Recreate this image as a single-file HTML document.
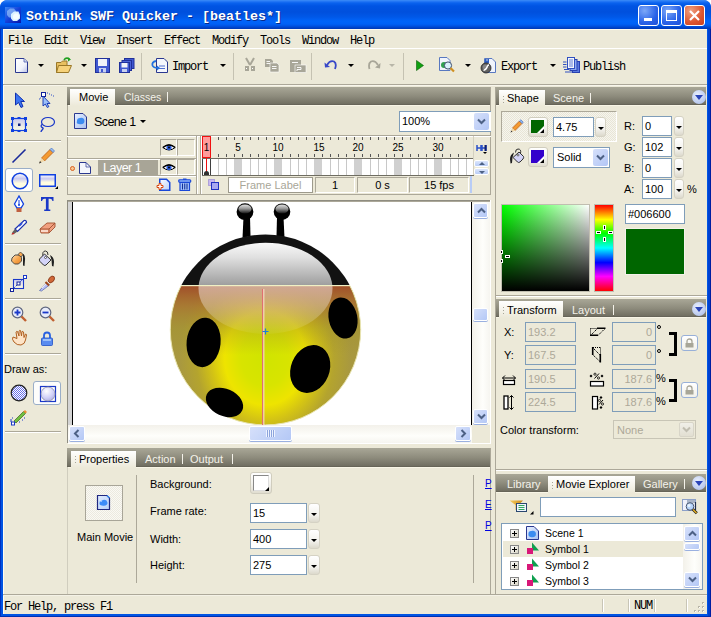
<!DOCTYPE html>
<html><head><meta charset="utf-8">
<style>
*{box-sizing:border-box}
html,body{margin:0;padding:0;background:#fff}
body{width:711px;height:617px;overflow:hidden;position:relative;background:#fff;font-family:"Liberation Sans",sans-serif;font-size:11px;color:#000}
.a{position:absolute}
.mono{font-family:"Liberation Mono",monospace}
.tb{background:linear-gradient(#A9A797,#8E8C7D 50%,#716F62 94%,#5E5C50)}
.tab{background:linear-gradient(#FCFBF6,#ECE9D8)}
.inp{background:#fff;border:1px solid #7F9DB9}
.dinp{background:#ECE9D8;border:1px solid #7F9DB9;color:#ACA899}
.ddb{background:linear-gradient(#FFFFFF,#F4F3EE 60%,#DCD9CC);border:1px solid #D5D2C4;border-radius:3px}
.ddb:after{content:"";position:absolute;left:calc(50% - 3px);top:9px;border-left:3px solid transparent;border-right:3px solid transparent;border-top:3px solid #000}
.xpd{background:linear-gradient(135deg,#E2EAFE,#B6CAF9);border:1px solid #fff;border-radius:2px;box-shadow:0 0 0 0 #fff}
.lbl{white-space:nowrap}
.sep{background:#C5C2B2}
</style></head><body>

<!-- window frame -->
<div class="a" style="left:0;top:0;width:711px;height:617px;background:#0054E3;border-radius:8px 8px 0 0"></div>
<div class="a" style="left:0;top:29px;width:1px;height:588px;background:#0030C0"></div>
<div class="a" style="left:710px;top:29px;width:1px;height:588px;background:#001EA0"></div>
<div class="a" style="left:708px;top:29px;width:2px;height:588px;background:#0040D0"></div>
<div class="a" style="left:0;top:616px;width:711px;height:1px;background:#0030B0"></div>
<!-- title bar -->
<div class="a" style="left:0;top:0;width:711px;height:29px;border-radius:7px 7px 0 0;background:linear-gradient(#3E8EF6 0px,#2A7CF6 1px,#0A62EE 3px,#0054E3 6px,#0050DD 12px,#0058E8 17px,#0064F9 21px,#0061F6 24px,#0052E2 26px,#003FC2 28px,#0039B4 29px)"></div>
<!-- app icon -->
<svg class="a" style="left:5px;top:7px" width="16" height="16"><defs><linearGradient id="aig" x1="0" y1="0" x2="1" y2="1"><stop offset="0" stop-color="#3C88F8"/><stop offset=".5" stop-color="#1440D8"/><stop offset="1" stop-color="#0A14A8"/></linearGradient></defs><rect width="16" height="16" fill="url(#aig)"/><path d="M2 4L5 1.5H9L11 4V8L8 10.5H4L2 8Z" fill="#8CB8F8" opacity=".75"/><path d="M6 7L9 4.5H13.5L15 8V11.5L12 14H8L6 11.5Z" fill="#D8F0FF"/><path d="M8 8.5L10 6.5H13L14 9V11L12 12.5H9L8 11Z" fill="#F4FCFF"/></svg>
<div class="a mono" style="left:26px;top:9px;font-weight:bold;font-size:13.33px;line-height:16px;color:#fff;text-shadow:1px 1px 0 #0A2A8A;white-space:nowrap">Sothink SWF Quicker - [beatles*]</div>
<!-- title buttons -->
<div class="a" style="left:638px;top:5px;width:21px;height:21px;border:1px solid #fff;border-radius:3px;background:radial-gradient(circle at 30% 25%,#7DA8F8,#2A63E8 60%,#1F50D8)"><div class="a" style="left:5px;top:12px;width:8px;height:3px;background:#fff"></div></div>
<div class="a" style="left:661px;top:5px;width:21px;height:21px;border:1px solid #fff;border-radius:3px;background:radial-gradient(circle at 30% 25%,#7DA8F8,#2A63E8 60%,#1F50D8)"><div class="a" style="left:4px;top:4px;width:11px;height:11px;border:1px solid #fff;border-top:3px solid #fff"></div></div>
<div class="a" style="left:684px;top:5px;width:21px;height:21px;border:1px solid #fff;border-radius:3px;background:radial-gradient(circle at 30% 25%,#F0A080,#DC5530 60%,#C84020)"><svg class="a" style="left:3px;top:3px" width="13" height="13"><path d="M2 2L11 11M11 2L2 11" stroke="#fff" stroke-width="2.2"/></svg></div>

<!-- client -->
<div class="a" style="left:3px;top:29px;width:704px;height:585px;background:#ECE9D8"></div>
<div class="a" style="left:3px;top:29px;width:1px;height:585px;background:#FFFBF0"></div>
<div class="a" style="left:3px;top:29px;width:704px;height:1px;background:#FFFBF0"></div>

<!-- menu -->
<div class="a mono" style="left:8px;top:34px;font-size:12px;letter-spacing:-1.2px;line-height:14px;white-space:pre">File  Edit  View  Insert  Effect  Modify  Tools  Window  Help</div>
<div class="a" style="left:3px;top:48px;width:704px;height:1px;background:#FFFFFF"></div>

<!-- toolbar -->
<div class="a" style="left:3px;top:84px;width:704px;height:1px;background:#ACA899"></div>
<div class="a" style="left:3px;top:85px;width:704px;height:1px;background:#F8F6EC"></div>

<!-- toolbar icons -->
<svg class="a" style="left:14px;top:57px" width="15" height="17"><defs><linearGradient id="pg" x1="0" y1="0" x2="1" y2="1"><stop offset="0" stop-color="#fff"/><stop offset=".6" stop-color="#F0F2FA"/><stop offset="1" stop-color="#B8C0E8"/></linearGradient></defs><path d="M1.5 1.5H10L13.5 5V15.5H1.5Z" fill="url(#pg)" stroke="#2A3890"/><path d="M10 1.5V5H13.5" fill="#D0D8F0" stroke="#5060B0" stroke-width=".8"/></svg>
<div class="a" style="left:38px;top:64px;border-left:3px solid transparent;border-right:3px solid transparent;border-top:3px solid #000"></div>
<svg class="a" style="left:55px;top:56px" width="18" height="18"><path d="M1.5 6.5H6L7.5 5H12V16.5H1.5Z" fill="#E8C060" stroke="#9A7828"/><path d="M3.5 9.5H16.5L13.5 16.5H1.5Z" fill="#F6D27A" stroke="#9A7828"/><path d="M9 4Q11 1 14.5 3" fill="none" stroke="#20A020" stroke-width="1.6"/><path d="M13 1.5L16 3.5L13 5.5Z" fill="#20A020"/></svg>
<div class="a" style="left:81px;top:64px;border-left:3px solid transparent;border-right:3px solid transparent;border-top:3px solid #000"></div>
<svg class="a" style="left:95px;top:58px" width="16" height="16"><rect x=".5" y=".5" width="14" height="14" fill="#4058D0" stroke="#20309A"/><rect x="3" y="1" width="9" height="7" fill="#F0F2F8"/><rect x="4" y="10" width="7" height="4.5" fill="#C8D0F0"/><rect x="6" y="11" width="2" height="3" fill="#4058D0"/></svg>
<svg class="a" style="left:119px;top:58px" width="16" height="16"><rect x="5.5" y=".5" width="9.5" height="10" fill="#4058D0" stroke="#20309A"/><rect x="3" y="2.5" width="9.5" height="10" fill="#4A62D8" stroke="#20309A"/><rect x=".5" y="4.5" width="10" height="10" fill="#4058D0" stroke="#20309A"/><rect x="2.5" y="5" width="6" height="4.5" fill="#F0F2F8"/><rect x="3" y="11" width="5" height="3" fill="#C8D0F0"/></svg>
<div class="a sep" style="left:141px;top:53px;width:1px;height:27px"></div>
<svg class="a" style="left:151px;top:57px" width="18" height="17"><path d="M5.5 1.5H13L16.5 5V15.5H5.5Z" fill="#F4F6FC" stroke="#2A3890"/><path d="M8 9H14M8 11.5H14" stroke="#5070D0"/><path d="M5 4Q0.5 5 1.5 8.5Q2.5 11 7 11" fill="none" stroke="#2070E0" stroke-width="1.8"/><path d="M6 8.5L9 11L6 13.5Z" fill="#2070E0"/></svg>
<div class="a mono" style="left:172px;top:60px;font-size:12px;letter-spacing:-1.2px;line-height:14px">Import</div>
<div class="a" style="left:220px;top:64px;border-left:3px solid transparent;border-right:3px solid transparent;border-top:3px solid #000"></div>
<div class="a sep" style="left:233px;top:53px;width:1px;height:27px"></div>
<svg class="a" style="left:244px;top:57px" width="13" height="16"><path d="M2 1L6 8M10 1L6 8" stroke="#A8A698" stroke-width="2"/><rect x="1" y="9" width="4" height="5" fill="#A8A698"/><rect x="7" y="9" width="4" height="5" fill="#A8A698"/><rect x="2" y="11" width="1" height="1" fill="#fff"/><rect x="8" y="11" width="1" height="1" fill="#fff"/></svg>
<svg class="a" style="left:264px;top:58px" width="17" height="15"><path d="M1 1H7L9 3V9H1Z" fill="#A8A698"/><path d="M6 5H13L15 7V14H6Z" fill="#A8A698" stroke="#fff" stroke-width=".6"/><path d="M2.5 3.5H6M2.5 5.5H6M8 8.5H12.5M8 10.5H12.5" stroke="#fff" stroke-width=".9"/></svg>
<svg class="a" style="left:289px;top:58px" width="18" height="15"><path d="M1 2H8V3H12V7H1Z" fill="#A8A698"/><rect x="1" y="2" width="11" height="12" fill="#A8A698"/><rect x="6" y="7" width="11" height="7.5" fill="#A8A698" stroke="#fff" stroke-width=".6"/><path d="M3 4.5H9M8 9.5H12V11.5H8V13" stroke="#fff" stroke-width=".9" fill="none"/></svg>
<div class="a sep" style="left:311px;top:53px;width:1px;height:27px"></div>
<svg class="a" style="left:324px;top:59px" width="14" height="12"><path d="M3 6Q6 1 10 2.5Q13 4.5 11 10" fill="none" stroke="#3848C8" stroke-width="1.8"/><path d="M0.5 3.5L1 8.5L6 8Z" fill="#3848C8"/></svg>
<div class="a" style="left:348px;top:64px;border-left:3px solid transparent;border-right:3px solid transparent;border-top:3px solid #000"></div>
<svg class="a" style="left:367px;top:59px" width="14" height="12"><path d="M11 6Q8 1 4 2.5Q1 4.5 2.5 10" fill="none" stroke="#A8A698" stroke-width="1.8"/><path d="M13.5 4L13 9.5L8 8.5Z" fill="#A8A698"/></svg>
<div class="a" style="left:389px;top:64px;border-left:3px solid transparent;border-right:3px solid transparent;border-top:3px solid #B8B6A8"></div>
<div class="a sep" style="left:403px;top:53px;width:1px;height:27px"></div>
<svg class="a" style="left:416px;top:60px" width="9" height="12"><path d="M0.5 0.5L7.5 5.5L0.5 10.5Z" fill="#10A010" stroke="#086008" stroke-width=".6"/></svg>
<svg class="a" style="left:439px;top:57px" width="17" height="17"><path d="M.5 .5H8L11 3.5V13.5H.5Z" fill="#F0F4FC" stroke="#5878C0"/><circle cx="5" cy="8" r="3" fill="#30A050"/><circle cx="9" cy="8.5" r="3.6" fill="#D8F0FA" stroke="#405070" stroke-width="1"/><path d="M11.5 11L15 14.5" stroke="#D09020" stroke-width="2.2"/></svg>
<div class="a" style="left:465px;top:64px;border-left:3px solid transparent;border-right:3px solid transparent;border-top:3px solid #000"></div>
<svg class="a" style="left:480px;top:57px" width="17" height="17"><path d="M4.5 1.5H12L15.5 5V15.5H4.5Z" fill="#F0F4FC" stroke="#5878C0"/><rect x="5" y="2" width="4" height="4" fill="#3060C0"/><path d="M6 3H8" stroke="#fff" stroke-width=".7"/><circle cx="6" cy="11" r="5" fill="#606060" stroke="#202020" stroke-width=".8"/><circle cx="5.2" cy="10" r="2.5" fill="#A0A0A0" opacity=".6"/><path d="M3.5 13.5Q6.5 12.5 7.5 9Q8 8 9 8" stroke="#fff" stroke-width="1.3" fill="none"/></svg>
<div class="a mono" style="left:501px;top:60px;font-size:12px;letter-spacing:-1.2px;line-height:14px">Export</div>
<div class="a" style="left:550px;top:64px;border-left:3px solid transparent;border-right:3px solid transparent;border-top:3px solid #000"></div>
<svg class="a" style="left:563px;top:57px" width="17" height="17"><rect x="9.5" y="4.5" width="7" height="11" fill="#5878E0" stroke="#2840B0"/><rect x="7" y="2.5" width="7" height="11" fill="#8CA8F0" stroke="#2840B0"/><rect x="4.5" y=".5" width="7" height="11" fill="#F4F6FC" stroke="#3050C0"/><path d="M6 3H10M6 5H10M6 7H10M6 9H10" stroke="#5070D0" stroke-width=".9"/><path d="M0 5H3.5M0 7.5H3.5M0 10H3.5M1 12.5H6M2 15H9" stroke="#3050C0" stroke-width="1"/></svg>
<div class="a mono" style="left:583px;top:60px;font-size:12px;letter-spacing:-1.2px;line-height:14px">Publish</div>

<!--TOOLBAR-->

<!-- tool panel -->
<svg class="a" style="left:14px;top:92px" width="12" height="17"><path d="M1.5 1V13L4.5 10.5L7 15.5L9 14.5L6.8 9.5H10.5Z" fill="#3C74F0" stroke="#1030B0" stroke-width="1"/></svg>
<svg class="a" style="left:38px;top:92px" width="18" height="17"><rect x="3.5" y=".5" width="4" height="4" fill="#fff" stroke="#10209A"/><path d="M9 1H10M11 2H12M13 3H14M15 4H16M1 7H2M2 6H3" stroke="#3050C8" stroke-width="1"/><path d="M5 4V14L7.3 12L9.3 15.5L10.8 14.7L9 11.5H12Z" fill="#9CC0FA" stroke="#1030B0" stroke-width=".9"/></svg>
<svg class="a" style="left:11px;top:117px" width="17" height="16"><defs><linearGradient id="tg1" x1="0" y1="0" x2="0" y2="1"><stop offset="0" stop-color="#C8C8F0"/><stop offset="1" stop-color="#FFFDE0"/></linearGradient></defs><rect x="1.5" y="1.5" width="13" height="12" fill="url(#tg1)" stroke="#1040E0" stroke-width="1.2"/><g fill="#1040E0"><rect x="0" y="0" width="3" height="3"/><rect x="13" y="0" width="3" height="3"/><rect x="0" y="12" width="3" height="3"/><rect x="13" y="12" width="3" height="3"/><rect x="6.5" y="0" width="3" height="2"/><rect x="6.5" y="13" width="3" height="2"/><rect x="0" y="6" width="2" height="3"/><rect x="14" y="6" width="2" height="3"/></g><rect x="7" y="6.5" width="2.5" height="2.5" fill="#102080"/></svg>
<svg class="a" style="left:38px;top:116px" width="18" height="17"><ellipse cx="10" cy="6" rx="6.5" ry="4.5" fill="none" stroke="#1A38C8" stroke-width="1.2"/><path d="M4.5 8Q2 10 4 11.5Q6 12 4.5 13.5Q3 15 3 16" fill="none" stroke="#1A38C8" stroke-width="1.3"/></svg>
<div class="a" style="left:5px;top:140px;width:56px;height:1px;background:#ACA899"></div>
<div class="a" style="left:5px;top:141px;width:56px;height:1px;background:#fff"></div>
<svg class="a" style="left:11px;top:148px" width="16" height="16"><path d="M1.5 14.5L14.5 1.5" stroke="#1A2A9A" stroke-width="1.6"/></svg>
<svg class="a" style="left:38px;top:147px" width="17" height="17"><path d="M3.5 11L12 2.5L15 5.5L6.5 14Z" fill="#F49A30" stroke="#B85A10" stroke-width=".8"/><path d="M12 2.5L13.5 1L16.5 4L15 5.5Z" fill="#9AC0F0" stroke="#3060C0" stroke-width=".6"/><path d="M3.5 11L1 16.5L6.5 14Z" fill="#F0D8A8"/><path d="M1 16.5L2 14L3.5 15.5Z" fill="#303030"/></svg>
<div class="a" style="left:5px;top:168px;width:28px;height:24px;background:#FDFDFB;border:1px solid #9AAEC8;border-radius:3px"></div>
<svg class="a" style="left:11px;top:172px" width="18" height="18"><defs><linearGradient id="tg2" x1="0" y1="0" x2="0" y2="1"><stop offset="0" stop-color="#FFFFFF"/><stop offset=".35" stop-color="#C8C8F0"/><stop offset=".65" stop-color="#FFFDE0"/><stop offset="1" stop-color="#FFFDE0"/></linearGradient></defs><circle cx="9" cy="9" r="7.8" fill="url(#tg2)" stroke="#1040E0" stroke-width="1.5"/></svg>
<svg class="a" style="left:38px;top:173px" width="21" height="17"><rect x="1.75" y="1.75" width="15.5" height="11.5" fill="url(#tg2)" stroke="#1040E0" stroke-width="1.5"/><path d="M20 13V16H17Z" fill="#000"/></svg>
<svg class="a" style="left:13px;top:195px" width="12" height="18"><path d="M6 1L1.5 9L4 13H8L10.5 9Z" fill="#fff" stroke="#1040E0" stroke-width="1.3"/><path d="M6 5V10" stroke="#1040E0"/><circle cx="6" cy="10" r="1" fill="#1040E0"/><rect x="3.5" y="13" width="5" height="4" fill="#C06040"/></svg>
<svg class="a" style="left:41px;top:197px" width="13" height="15"><path d="M0 0H12.5V4H11.5Q11 1.8 9 1.8H7.6V12.6H9.3V14H3.2V12.6H4.9V1.8H3.5Q1.5 1.8 1 4H0Z" fill="#1A38C8"/></svg>
<svg class="a" style="left:10px;top:219px" width="18" height="17"><path d="M5 10L14 1.5Q16.5 1 16.5 3.5L7.5 12.5Z" fill="#fff" stroke="#1A30B0" stroke-width="1.2"/><path d="M9 7L12 4" stroke="#3050D8" stroke-width="2"/><path d="M5 10L7.5 12.5L4 15L1.5 15.5L2.5 13Z" fill="#606060"/><path d="M1.5 15.5L3 13.5L4.5 15Z" fill="#E02020"/></svg>
<svg class="a" style="left:39px;top:222px" width="17" height="13"><path d="M1 7L8 1H16V5L10 11H2Z" fill="#F0A080" stroke="#A05030" stroke-width=".9"/><path d="M1 7H10V11M10 7L16 1" fill="none" stroke="#A05030" stroke-width=".9"/><path d="M2 8H9V10H2Z" fill="#FAD8C8"/></svg>
<div class="a" style="left:5px;top:243px;width:56px;height:1px;background:#ACA899"></div>
<div class="a" style="left:5px;top:244px;width:56px;height:1px;background:#fff"></div>
<svg class="a" style="left:10px;top:251px" width="17" height="16"><defs><linearGradient id="ink" x1="0" y1="0" x2="1" y2="1"><stop offset="0" stop-color="#FFE0B8"/><stop offset=".5" stop-color="#F8A850"/><stop offset="1" stop-color="#E88020"/></linearGradient></defs><path d="M2 7L5 4H9L11.5 6.5V10L8.5 13H4.5L1.5 10Z" fill="url(#ink)" stroke="#404040" stroke-width=".9"/><path d="M8 3.5L10.5 1L13 3.5L11 6Z" fill="#F8A850" stroke="#404040" stroke-width=".8"/><path d="M12.5 2.5Q15.5 4 15 9L14.5 15L13 14.5V6Z" fill="#202020"/></svg>
<svg class="a" style="left:38px;top:250px" width="18" height="17"><path d="M5 6Q4 1 7.5 1Q10 1 10 5" fill="none" stroke="#303030" stroke-width="1"/><path d="M1.5 9L6.5 4L13 10L8 15Q7 16 5.5 15L2 11.5Q1 10 1.5 9Z" fill="#D4D4F8" stroke="#303030" stroke-width="1"/><circle cx="7.5" cy="7.5" r="1" fill="#fff" stroke="#303030" stroke-width=".7"/><path d="M12 5Q16 7 16 12L15.5 16.5L14 16L13.5 10Z" fill="#202020"/></svg>
<svg class="a" style="left:10px;top:275px" width="17" height="17"><defs><linearGradient id="ftg" x1="0" y1="0" x2="0" y2="1"><stop offset="0" stop-color="#D0D0F4"/><stop offset="1" stop-color="#FFFDE0"/></linearGradient></defs><rect x="3.5" y="4.5" width="10" height="9" fill="url(#ftg)" stroke="#1A38C8" stroke-width="1.1"/><path d="M2.5 14.5L14.5 2.5" stroke="#1A38C8" stroke-width="1" stroke-dasharray="1.5 1"/><rect x=".5" y="13.5" width="3" height="3" fill="#fff" stroke="#10209A"/><rect x="13.5" y=".5" width="3" height="3" fill="#fff" stroke="#1A38C8"/><rect x="7" y="7" width="3" height="3" fill="#fff" stroke="#10209A"/></svg>
<svg class="a" style="left:38px;top:274px" width="18" height="18"><path d="M1.5 16.5L9 8.5L11.5 11L3.5 17Z" fill="#B8C0F8" stroke="#6070B0" stroke-width=".8"/><path d="M4 14L9 9" stroke="#fff" stroke-width=".8"/><path d="M7.5 8L11 11.5" stroke="#A04818" stroke-width="2"/><path d="M10 7Q11 3 14 2Q17 2 16.5 5Q16 8 12 9Z" fill="#D06838" stroke="#803010" stroke-width=".8"/></svg>
<div class="a" style="left:5px;top:298px;width:56px;height:1px;background:#ACA899"></div>
<div class="a" style="left:5px;top:299px;width:56px;height:1px;background:#fff"></div>
<svg class="a" style="left:11px;top:306px" width="17" height="17"><circle cx="6.5" cy="6.5" r="5.3" fill="#E8ECFA" stroke="#606880" stroke-width="1.2"/><path d="M6.5 3.5V9.5M3.5 6.5H9.5" stroke="#1A38C8" stroke-width="1.8"/><path d="M10.5 10.5L15 15" stroke="#C06030" stroke-width="2.4"/></svg>
<svg class="a" style="left:39px;top:306px" width="17" height="17"><circle cx="6.5" cy="6.5" r="5.3" fill="#E8ECFA" stroke="#606880" stroke-width="1.2"/><path d="M3.5 6.5H9.5" stroke="#1A38C8" stroke-width="1.8"/><path d="M10.5 10.5L15 15" stroke="#C06030" stroke-width="2.4"/></svg>
<svg class="a" style="left:10px;top:329px" width="18" height="18"><path d="M3 8Q1.5 10 4 13Q7 16.5 11 16Q15 15 15.5 11L16.5 6Q16.5 5 15.5 5L14 8.5L13.5 3Q13 2 12 2.5L11.5 7L10.5 1.5Q9.5 1 9 2L9 7L7.5 2.5Q6.5 2 6 3L7 9.5Z" fill="#FDE4C8" stroke="#B06020" stroke-width="1"/></svg>
<svg class="a" style="left:40px;top:331px" width="15" height="16"><path d="M4 7V4.5Q4 1.5 7 1.5Q10 1.5 10 4.5V7" fill="none" stroke="#2860E0" stroke-width="1.8"/><rect x="1.5" y="7" width="11" height="7.5" rx="1" fill="#5A8CF0" stroke="#2050C8" stroke-width=".8"/><rect x="3" y="8" width="8" height="2" fill="#9CC0FA"/></svg>
<div class="a" style="left:5px;top:353px;width:56px;height:1px;background:#ACA899"></div>
<div class="a" style="left:5px;top:354px;width:56px;height:1px;background:#fff"></div>
<div class="a" style="left:4px;top:363px;font-size:11px;line-height:13px;white-space:nowrap">Draw as:</div>
<svg class="a" style="left:10px;top:384px" width="18" height="18"><defs><pattern id="hatch" width="2" height="2" patternUnits="userSpaceOnUse"><rect width="2" height="2" fill="#fff"/><rect width="1" height="1" fill="#6870E8"/><rect x="1" y="1" width="1" height="1" fill="#6870E8"/></pattern></defs><circle cx="9" cy="9" r="7.8" fill="url(#hatch)" stroke="#202020" stroke-width="1.2"/></svg>
<div class="a" style="left:33px;top:381px;width:28px;height:24px;background:#FDFDFB;border:1px solid #9AAEC8;border-radius:3px"></div>
<svg class="a" style="left:39px;top:385px" width="18" height="18"><rect x="1.5" y="1.5" width="15" height="15" fill="none" stroke="#1A38C8" stroke-width="1.2"/><defs><radialGradient id="tg3" cx=".4" cy=".3" r=".8"><stop offset="0" stop-color="#FFFFFF"/><stop offset=".6" stop-color="#D0D0F8"/><stop offset="1" stop-color="#A8A8D8"/></radialGradient></defs><circle cx="9" cy="9" r="7" fill="url(#tg3)" stroke="#9090A8" stroke-width=".8"/></svg>
<svg class="a" style="left:10px;top:409px" width="18" height="17"><path d="M4 12L13.5 2.5L15.5 4.5L6 14Z" fill="#70C040" stroke="#406020" stroke-width=".7"/><path d="M13.5 2.5L15 1L17 3L15.5 4.5Z" fill="#F09030"/><path d="M1 10V13M2 9H3M9 13H10M12 11H13M14 9H15" stroke="#1A38C8"/><rect x="1.5" y="13" width="3" height="3" fill="#fff" stroke="#1A38C8"/></svg>
<div class="a" style="left:5px;top:431px;width:56px;height:1px;background:#ACA899"></div>
<div class="a" style="left:5px;top:432px;width:56px;height:1px;background:#fff"></div>

<!--TOOLS-->

<!-- center: movie panel -->
<div class="a tb" style="left:67px;top:87px;width:423px;height:18px"></div>
<div class="a" style="left:67px;top:105px;width:423px;height:1px;background:#F8F5E6"></div>
<div class="a tab" style="left:70px;top:89px;width:45px;height:17px;background:linear-gradient(#FFFFFF,#F4F2E8 60%,#ECE9D8)"></div>
<div class="a lbl" style="left:79px;top:90px;line-height:14px;font-size:11px">Movie</div>
<div class="a lbl" style="left:124px;top:90px;line-height:14px;font-size:10.5px;color:#F4F2EA">Classes</div>
<div class="a" style="left:167px;top:92px;width:1px;height:10px;background:#F4F2EA"></div>
<div class="a" style="left:67px;top:105px;width:1px;height:90px;background:#ACA899"></div>
<div class="a" style="left:490px;top:87px;width:1px;height:108px;background:#ACA899"></div>
<svg class="a" style="left:73px;top:112px" width="16" height="18"><defs><linearGradient id="sc" x1="0" y1="0" x2="1" y2="1"><stop offset="0" stop-color="#E8F0FF"/><stop offset="1" stop-color="#A8C0F0"/></linearGradient></defs><path d="M1.5 1.5H10L13.5 5V16.5H1.5Z" fill="url(#sc)" stroke="#2A3890"/><path d="M4 9Q4 6 7 6Q9 5 11 7Q12 9 11 11Q9 13 6 12Q3 12 4 9Z" fill="#3C8CF0"/></svg>
<div class="a lbl" style="left:94px;top:115px;line-height:15px;font-size:12.5px;letter-spacing:-0.6px">Scene 1</div>
<div class="a" style="left:140px;top:120px;border-left:3px solid transparent;border-right:3px solid transparent;border-top:3px solid #000"></div>
<div class="a inp" style="left:399px;top:111px;width:92px;height:21px;border-right:none"></div>
<div class="a lbl" style="left:402px;top:114px;line-height:14px;font-size:11px">100%</div>
<div class="a" style="left:474px;top:113px;width:15px;height:17px;border-radius:2px;background:linear-gradient(135deg,#D6E0FA,#B2C6F6)"></div>
<svg class="a" style="left:477px;top:118px" width="9" height="7"><path d="M1 1.5L4.5 5L8 1.5" fill="none" stroke="#4D6185" stroke-width="2"/></svg>
<div class="a" style="left:67px;top:135px;width:424px;height:1px;background:#ACA899"></div>
<div class="a" style="left:67px;top:136px;width:424px;height:1px;background:#FFFFFF"></div>
<!-- layers panel -->
<div class="a" style="left:67px;top:158px;width:130px;height:1px;background:#ACA899"></div>
<div class="a" style="left:67px;top:159px;width:130px;height:1px;background:#fff"></div>
<div class="a" style="left:67px;top:175px;width:130px;height:1px;background:#ACA899"></div>
<div class="a" style="left:67px;top:176px;width:130px;height:1px;background:#fff"></div>
<div class="a" style="left:196px;top:136px;width:1px;height:58px;background:#ACA899"></div>
<div class="a" style="left:197px;top:136px;width:1px;height:58px;background:#fff"></div>
<div class="a" style="left:200px;top:136px;width:1px;height:58px;background:#ACA899"></div>
<div class="a" style="left:201px;top:136px;width:1px;height:58px;background:#fff"></div>
<div class="a" style="left:160px;top:139px;width:17px;height:17px;border-top:1px solid #ACA899;border-left:1px solid #ACA899;border-bottom:1px solid #fff;border-right:1px solid #fff"></div>
<div class="a" style="left:177px;top:139px;width:18px;height:17px;border-top:1px solid #ACA899;border-left:1px solid #ACA899;border-bottom:1px solid #fff;border-right:1px solid #fff"></div>
<div class="a" style="left:160px;top:159px;width:17px;height:16px;border-top:1px solid #ACA899;border-left:1px solid #ACA899;border-bottom:1px solid #fff;border-right:1px solid #fff"></div>
<div class="a" style="left:177px;top:159px;width:18px;height:16px;border-top:1px solid #ACA899;border-left:1px solid #ACA899;border-bottom:1px solid #fff;border-right:1px solid #fff"></div>
<svg class="a" style="left:162px;top:143px" width="14" height="9"><path d="M0.8 4.5Q7 -1 13.2 4.5Q7 9.5 0.8 4.5Z" fill="#fff" stroke="#000" stroke-width="1"/><circle cx="7" cy="4.6" r="2.6" fill="#2A5CD8"/><circle cx="7" cy="4.6" r="1" fill="#000"/><path d="M1 4.5Q7 -0.5 13 4.5" fill="none" stroke="#000" stroke-width="1.6"/></svg>
<svg class="a" style="left:162px;top:163px" width="14" height="9"><path d="M0.8 4.5Q7 -1 13.2 4.5Q7 9.5 0.8 4.5Z" fill="#fff" stroke="#000" stroke-width="1"/><circle cx="7" cy="4.6" r="2.6" fill="#2A5CD8"/><circle cx="7" cy="4.6" r="1" fill="#000"/><path d="M1 4.5Q7 -0.5 13 4.5" fill="none" stroke="#000" stroke-width="1.6"/></svg>
<div class="a" style="left:70px;top:166px;width:5px;height:5px;border-radius:3px;border:1px solid #D86020;background:#F8C890"></div>
<svg class="a" style="left:79px;top:162px" width="13" height="13"><path d="M.5 .5H7L11.5 5V11.5H.5Z" fill="#F4F6FC" stroke="#2A3890"/><path d="M7 .5V5H11.5" fill="none" stroke="#2A3890" stroke-width=".7"/></svg>
<div class="a" style="left:98px;top:160px;width:60px;height:15px;background:#A8A597"></div>
<div class="a lbl" style="left:103px;top:161px;line-height:15px;font-size:12.5px;letter-spacing:-0.5px;color:#fff">Layer 1</div>
<svg class="a" style="left:156px;top:178px" width="16" height="14"><defs><linearGradient id="alg" x1="0" y1="0" x2="1" y2="1"><stop offset="0" stop-color="#fff"/><stop offset="1" stop-color="#B8D0F8"/></linearGradient></defs><path d="M3.75 1.25H10.5L13.75 4.5V12.25H3.75Z" fill="url(#alg)" stroke="#1A48D8" stroke-width="1.5"/><path d="M3 5.5H5V7.5H7V9.5H5V11.5H3V9.5H1V7.5H3Z" fill="#fff" stroke="#D84810" stroke-width="1"/></svg>
<svg class="a" style="left:178px;top:178px" width="14" height="14"><rect x="5" y=".5" width="3.5" height="1.5" fill="#1A48D8"/><rect x=".75" y="1.75" width="12" height="2.5" rx="1" fill="#8CB0F8" stroke="#1A48D8" stroke-width="1.2"/><path d="M2 4.5H11.5V12.5H2Z" fill="#A8C4FA" stroke="#1A48D8" stroke-width="1.2"/><path d="M4.5 5.5V11.5M6.75 5.5V11.5M9 5.5V11.5" stroke="#10309A" stroke-width="1.1"/></svg>
<!-- timeline ruler -->
<div class="a" style="left:202px;top:137px;width:271px;height:21px;background:#ECE9D8"></div>
<div class="a" style="left:473px;top:136px;width:1px;height:40px;background:#D4D0C0"></div>
<svg class="a" style="left:202px;top:136px" width="272" height="40" shape-rendering="crispEdges">
<g stroke="#555" stroke-width="1">
<path d="M16.5 1V4M24.5 1V4M32.5 1V4M40.5 1V4M48.5 1V4M56.5 1V4M64.5 1V4M72.5 1V4M80.5 1V4M88.5 1V4M96.5 1V4M104.5 1V4M112.5 1V4M120.5 1V4M128.5 1V4M136.5 1V4M144.5 1V4M152.5 1V4M160.5 1V4M168.5 1V4M176.5 1V4M184.5 1V4M192.5 1V4M200.5 1V4M208.5 1V4M216.5 1V4M224.5 1V4M232.5 1V4M240.5 1V4M248.5 1V4M256.5 1V4M264.5 1V4"/>
<path d="M16.5 18V21M24.5 18V21M32.5 18V21M40.5 18V21M48.5 18V21M56.5 18V21M64.5 18V21M72.5 18V21M80.5 18V21M88.5 18V21M96.5 18V21M104.5 18V21M112.5 18V21M120.5 18V21M128.5 18V21M136.5 18V21M144.5 18V21M152.5 18V21M160.5 18V21M168.5 18V21M176.5 18V21M184.5 18V21M192.5 18V21M200.5 18V21M208.5 18V21M216.5 18V21M224.5 18V21M232.5 18V21M240.5 18V21M248.5 18V21M256.5 18V21M264.5 18V21"/>
</g>
<rect x="0" y="22" width="271" height="1" fill="#6F6D62"/>
<rect x="0" y="23" width="271" height="16" fill="#fff"/>
<g fill="#D0D0D0"><rect x="32" y="23" width="8" height="16"/><rect x="72" y="23" width="8" height="16"/><rect x="112" y="23" width="8" height="16"/><rect x="152" y="23" width="8" height="16"/><rect x="192" y="23" width="8" height="16"/><rect x="232" y="23" width="8" height="16"/></g>
<g fill="#C8C8C8"><rect x="16" y="23" width="1" height="16"/><rect x="24" y="23" width="1" height="16"/><rect x="48" y="23" width="1" height="16"/><rect x="56" y="23" width="1" height="16"/><rect x="64" y="23" width="1" height="16"/><rect x="88" y="23" width="1" height="16"/><rect x="96" y="23" width="1" height="16"/><rect x="104" y="23" width="1" height="16"/><rect x="128" y="23" width="1" height="16"/><rect x="136" y="23" width="1" height="16"/><rect x="144" y="23" width="1" height="16"/><rect x="168" y="23" width="1" height="16"/><rect x="176" y="23" width="1" height="16"/><rect x="184" y="23" width="1" height="16"/><rect x="208" y="23" width="1" height="16"/><rect x="216" y="23" width="1" height="16"/><rect x="224" y="23" width="1" height="16"/><rect x="248" y="23" width="1" height="16"/><rect x="256" y="23" width="1" height="16"/><rect x="264" y="23" width="1" height="16"/></g>
<rect x="0" y="23" width="1" height="16" fill="#404040"/><rect x="8" y="23" width="1" height="16" fill="#404040"/>
<rect x="0" y="39" width="271" height="1" fill="#6F6D62"/>
</svg>
<div class="a" style="left:234px;top:143px;width:8px;font-size:10px;line-height:10px;text-align:center">5</div>
<div class="a" style="left:270px;top:143px;width:16px;font-size:10px;line-height:10px;text-align:center">10</div>
<div class="a" style="left:311px;top:143px;width:16px;font-size:10px;line-height:10px;text-align:center">15</div>
<div class="a" style="left:350px;top:143px;width:16px;font-size:10px;line-height:10px;text-align:center">20</div>
<div class="a" style="left:390px;top:143px;width:16px;font-size:10px;line-height:10px;text-align:center">25</div>
<div class="a" style="left:430px;top:143px;width:16px;font-size:10px;line-height:10px;text-align:center">30</div>
<div class="a" style="left:202px;top:136px;width:9px;height:22px;background:#FF9C9C;border:1px solid #F01010"></div>
<div class="a" style="left:202px;top:143px;width:9px;font-size:10px;line-height:10px;text-align:center">1</div>
<div class="a" style="left:206px;top:158px;width:1px;height:17px;background:#F01010"></div>
<div class="a" style="left:204px;top:171px;width:5px;height:4px;border-radius:3px 3px 0 0;background:#303030"></div>
<div class="a" style="left:202px;top:175px;width:272px;height:1px;background:#6F6D62"></div>
<!-- timeline right column -->
<svg class="a" style="left:476px;top:144px" width="12" height="11"><path d="M1 1V7M5 1V7M1 4H5M6 1V7M10 1V7M6 4H10" stroke="#2A50C8" stroke-width="1.5"/><path d="M9.5 1V7" stroke="#102070" stroke-width="2"/><path d="M7 8H11L9 10Z" fill="#000"/></svg>
<div class="a" style="left:474px;top:160px;width:15px;height:7px;border-radius:2px;background:linear-gradient(#DCE6FC,#B8CCF6);border:1px solid #fff"></div>
<div class="a" style="left:479px;top:162px;border-left:3px solid transparent;border-right:3px solid transparent;border-bottom:3px solid #4D6185"></div>
<div class="a" style="left:474px;top:168px;width:15px;height:7px;border-radius:2px;background:linear-gradient(#DCE6FC,#B8CCF6);border:1px solid #fff"></div>
<div class="a" style="left:479px;top:171px;border-left:3px solid transparent;border-right:3px solid transparent;border-top:3px solid #4D6185"></div>
<!-- timeline bottom bar -->
<svg class="a" style="left:208px;top:179px" width="12" height="12"><rect x=".5" y=".5" width="6" height="6" fill="#C8B8F0" stroke="#8070D0" stroke-dasharray="1 1"/><rect x="3.5" y="3.5" width="7" height="7" fill="#A8A8F0" stroke="#2030C0"/></svg>
<div class="a" style="left:228px;top:177px;width:85px;height:16px;background:#fff;border:1px solid #ACA899;border-right-color:#fff;border-bottom-color:#fff;box-shadow:inset 0 0 0 0 #000"></div>
<div class="a" style="left:228px;top:177px;width:85px;height:16px;border:1px solid #9D9A8C"></div>
<div class="a lbl" style="left:228px;top:178px;width:85px;line-height:14px;font-size:11px;color:#A8A698;text-align:center">Frame Label</div>
<div class="a" style="left:315px;top:177px;width:40px;height:16px;border:1px solid;border-color:#ACA899 #fff #fff #ACA899"></div>
<div class="a lbl" style="left:315px;top:178px;width:40px;line-height:14px;font-size:11px;text-align:center">1</div>
<div class="a" style="left:357px;top:177px;width:51px;height:16px;border:1px solid;border-color:#ACA899 #fff #fff #ACA899"></div>
<div class="a lbl" style="left:357px;top:178px;width:51px;line-height:14px;font-size:11px;text-align:center">0 s</div>
<div class="a" style="left:409px;top:177px;width:60px;height:16px;border:1px solid;border-color:#ACA899 #fff #fff #ACA899"></div>
<div class="a lbl" style="left:409px;top:178px;width:60px;line-height:14px;font-size:11px;text-align:center">15 fps</div>
<div class="a" style="left:470px;top:176px;width:2px;height:17px;background:#B8CCF6"></div>
<div class="a" style="left:67px;top:194px;width:424px;height:1px;background:#ACA899"></div>

<!-- stage -->
<div class="a" style="left:67px;top:200px;width:424px;height:1px;background:#8E8C80"></div>
<div class="a" style="left:67px;top:201px;width:424px;height:1px;background:#ACA899"></div>
<div class="a" style="left:67px;top:200px;width:1px;height:243px;background:#8E8C80"></div>
<div class="a" style="left:68px;top:202px;width:4px;height:223px;background:#D4D4D4"></div>
<div class="a" style="left:72px;top:202px;width:1px;height:223px;background:#000"></div>
<div class="a" style="left:73px;top:202px;width:398px;height:223px;background:#fff"></div>
<div class="a" style="left:471px;top:202px;width:1px;height:223px;background:#000"></div>
<div class="a" style="left:68px;top:443px;width:423px;height:1px;background:#fff"></div>
<div class="a" style="left:490px;top:200px;width:1px;height:244px;background:#fff"></div>
<svg class="a" style="left:73px;top:202px" width="398" height="223" viewBox="73 202 398 223">
<defs>
<clipPath id="headclip"><rect x="150" y="200" width="230" height="85.5"/></clipPath>
<clipPath id="bodyclip"><rect x="150" y="285.5" width="230" height="150"/></clipPath>
<radialGradient id="bodyg" cx="265" cy="358" r="100" gradientUnits="userSpaceOnUse" gradientTransform="translate(265 358) scale(.86 1) translate(-265 -358)">
<stop offset="0" stop-color="#D0E400"/><stop offset=".28" stop-color="#D8E400"/><stop offset=".47" stop-color="#EEE400"/><stop offset=".62" stop-color="#D4C414"/><stop offset=".8" stop-color="#B4A42E"/><stop offset="1" stop-color="#A89840"/></radialGradient>
<linearGradient id="browng" x1="0" y1="285" x2="0" y2="355" gradientUnits="userSpaceOnUse"><stop offset="0" stop-color="#A04828" stop-opacity=".95"/><stop offset=".3" stop-color="#A86A2C" stop-opacity=".65"/><stop offset=".65" stop-color="#A09028" stop-opacity=".35"/><stop offset="1" stop-color="#A09028" stop-opacity="0"/></linearGradient>
<linearGradient id="grayg" x1="0" y1="242" x2="0" y2="286" gradientUnits="userSpaceOnUse"><stop offset="0" stop-color="#FAFAFA"/><stop offset=".35" stop-color="#E0E0E0"/><stop offset="1" stop-color="#9C9C9C"/></linearGradient>
<linearGradient id="whiteg" x1="0" y1="286" x2="0" y2="334" gradientUnits="userSpaceOnUse"><stop offset="0" stop-color="#FFFFFF" stop-opacity=".5"/><stop offset=".5" stop-color="#FFFFFF" stop-opacity=".28"/><stop offset="1" stop-color="#FFFFFF" stop-opacity=".05"/></linearGradient>
<linearGradient id="hlg" x1="0" y1="0" x2="0" y2="1"><stop offset="0" stop-color="#E4E4E4"/><stop offset=".45" stop-color="#9A9A9A"/><stop offset="1" stop-color="#101010"/></linearGradient><radialGradient id="ballg" cx=".45" cy=".3" r=".7"><stop offset="0" stop-color="#F0F0F0"/><stop offset=".35" stop-color="#707070"/><stop offset=".7" stop-color="#202020"/><stop offset="1" stop-color="#000"/></radialGradient>
</defs>
<path d="M243.5 217H250L250.5 236L242.5 238Z" fill="#000"/>
<path d="M277 217H283.5L284.5 238L276.5 236Z" fill="#000"/>
<circle cx="245" cy="211.7" r="8.4" fill="#000"/>
<circle cx="282" cy="211.7" r="8.3" fill="#000"/>
<ellipse cx="245" cy="209" rx="6.6" ry="4.6" fill="url(#hlg)"/>
<ellipse cx="282" cy="209" rx="6.6" ry="4.6" fill="url(#hlg)"/>
<g clip-path="url(#headclip)">
<circle cx="265.5" cy="329.7" r="95.2" fill="#121212"/>
<ellipse cx="265.5" cy="288.4" rx="67" ry="45.6" fill="url(#grayg)"/>
</g>
<g clip-path="url(#bodyclip)">
<circle cx="265.5" cy="329.7" r="95.2" fill="url(#bodyg)" stroke="#E8E4B0" stroke-width="1"/>
<circle cx="265.5" cy="329.7" r="94.5" fill="url(#browng)"/>
<ellipse cx="265.5" cy="288.4" rx="67" ry="45.6" fill="url(#whiteg)"/>
<ellipse cx="203.6" cy="342.4" rx="17" ry="24.8" transform="rotate(6 203.6 342.4)" fill="#000"/>
<ellipse cx="343" cy="318" rx="14.3" ry="20.8" transform="rotate(-12 343 318)" fill="#000"/>
<ellipse cx="310.2" cy="369" rx="19.3" ry="24.6" transform="rotate(22 310.2 369)" fill="#000"/>
<ellipse cx="224.5" cy="402.4" rx="19.5" ry="13.6" transform="rotate(24 224.5 402.4)" fill="#000"/>
</g>
<rect x="181" y="285" width="169" height="1.2" fill="#F0F0C4"/>
<rect x="262" y="289" width="1.2" height="136" fill="#E07070"/>
<rect x="263.2" y="289" width="1.2" height="136" fill="#F4D8C0"/>
<path d="M265.5 328.5V334.5M262.5 331.5H268.5" stroke="#1A7CE0" stroke-width="1.2"/>
</svg>
<!-- vertical scrollbar -->
<div class="a" style="left:472px;top:202px;width:18px;height:223px;background:linear-gradient(90deg,#F3F1EA,#FEFEFB 60%,#F6F5F0)"></div>
<div class="a" style="left:473px;top:203px;width:15px;height:15px;border-radius:2px;background:linear-gradient(135deg,#D6E0FA,#B4C8F6);border:1px solid #fff;box-shadow:0 1px 0 #9AB0E0"></div>
<svg class="a" style="left:477px;top:207px" width="9" height="7"><path d="M1 5.5L4.5 2L8 5.5" fill="none" stroke="#4D6185" stroke-width="2"/></svg>
<div class="a" style="left:473px;top:308px;width:15px;height:13px;border-radius:2px;background:linear-gradient(135deg,#D6E0FA,#B4C8F6);border:1px solid #fff;box-shadow:0 1px 0 #9AB0E0"></div>
<div class="a" style="left:473px;top:409px;width:15px;height:15px;border-radius:2px;background:linear-gradient(135deg,#D6E0FA,#B4C8F6);border:1px solid #fff;box-shadow:0 1px 0 #9AB0E0"></div>
<svg class="a" style="left:477px;top:413px" width="9" height="7"><path d="M1 1.5L4.5 5L8 1.5" fill="none" stroke="#4D6185" stroke-width="2"/></svg>
<!-- horizontal scrollbar -->
<div class="a" style="left:68px;top:425px;width:404px;height:18px;background:linear-gradient(#F3F1EA,#FEFEFB 60%,#F6F5F0)"></div>
<div class="a" style="left:472px;top:425px;width:18px;height:18px;background:#ECE9D8"></div>
<div class="a" style="left:69px;top:426px;width:16px;height:15px;border-radius:2px;background:linear-gradient(135deg,#D6E0FA,#B4C8F6);border:1px solid #fff;box-shadow:0 1px 0 #9AB0E0"></div>
<svg class="a" style="left:73px;top:429px" width="7" height="9"><path d="M5.5 1L2 4.5L5.5 8" fill="none" stroke="#4D6185" stroke-width="2"/></svg>
<div class="a" style="left:249px;top:426px;width:43px;height:15px;border-radius:2px;background:linear-gradient(135deg,#D6E0FA,#B4C8F6);border:1px solid #fff;box-shadow:0 1px 0 #9AB0E0"></div>
<svg class="a" style="left:266px;top:430px" width="9" height="7"><path d="M.5 0V7M2.5 0V7M4.5 0V7M6.5 0V7M8.5 0V7" stroke="#EEF3FF" stroke-width="1"/><path d="M1.5 0V7M3.5 0V7M5.5 0V7M7.5 0V7" stroke="#8CA4DC" stroke-width="1"/></svg>
<div class="a" style="left:455px;top:426px;width:16px;height:15px;border-radius:2px;background:linear-gradient(135deg,#D6E0FA,#B4C8F6);border:1px solid #fff;box-shadow:0 1px 0 #9AB0E0"></div>
<svg class="a" style="left:460px;top:429px" width="7" height="9"><path d="M1.5 1L5 4.5L1.5 8" fill="none" stroke="#4D6185" stroke-width="2"/></svg>

<!-- properties panel -->
<div class="a tb" style="left:67px;top:448px;width:424px;height:19px"></div>
<div class="a" style="left:67px;top:467px;width:424px;height:1px;background:#F8F5E6"></div>
<div class="a tab" style="left:71px;top:451px;width:65px;height:17px;background:linear-gradient(#FFFFFF,#F4F2E8 60%,#ECE9D8)"></div>
<div class="a" style="left:75px;top:456px;width:1px;height:1px;background:#A8A698"></div>
<div class="a" style="left:75px;top:459px;width:1px;height:1px;background:#A8A698"></div>
<div class="a" style="left:75px;top:462px;width:1px;height:1px;background:#A8A698"></div>
<div class="a lbl" style="left:79px;top:452px;line-height:14px;font-size:11px">Properties</div>
<div class="a lbl" style="left:145px;top:452px;line-height:14px;font-size:11px;color:#F4F2EA">Action</div>
<div class="a" style="left:182px;top:454px;width:1px;height:10px;background:#F4F2EA"></div>
<div class="a lbl" style="left:190px;top:452px;line-height:14px;font-size:11px;color:#F4F2EA">Output</div>
<div class="a" style="left:232px;top:454px;width:1px;height:10px;background:#F4F2EA"></div>
<div class="a" style="left:67px;top:467px;width:1px;height:127px;background:#D0CDBE"></div>
<div class="a" style="left:490px;top:448px;width:1px;height:146px;background:#ACA899"></div>
<div class="a" style="left:67px;top:594px;width:424px;height:1px;background:#ACA899"></div>
<div class="a" style="left:85px;top:485px;width:38px;height:36px;border:1px solid #A8A598;background:repeating-conic-gradient(#FAF9F4 0 25%,#ECEADF 0 50%) 0 0/2px 2px"></div>
<svg class="a" style="left:96px;top:494px" width="15" height="17"><defs><linearGradient id="sc2" x1="0" y1="0" x2="1" y2="1"><stop offset="0" stop-color="#E0ECFF"/><stop offset="1" stop-color="#B8D0F8"/></linearGradient></defs><path d="M1.5 1.5H11L13.5 4V15.5H1.5Z" fill="url(#sc2)" stroke="#202880" stroke-width="1.2"/><path d="M11 1.5L13.5 4" stroke="#3C8CF0" stroke-width="1.2"/><path d="M3.5 9Q3.5 7 6 6.5Q8 5 10.5 6.5Q12 8.5 11 10.5Q9 12.5 6 11.5Q3 11 3.5 9Z" fill="#3C8CF8"/><path d="M3 8.5Q4 7 6 7.5" stroke="#90C0FF" stroke-width="1" fill="none"/></svg>
<div class="a lbl" style="left:77px;top:530px;line-height:14px;font-size:11px">Main Movie</div>
<div class="a" style="left:136px;top:475px;width:1px;height:108px;background:#ACA899"></div>
<div class="a lbl" style="left:150px;top:477px;line-height:14px;font-size:11px">Background:</div>
<div class="a lbl" style="left:150px;top:504px;line-height:14px;font-size:11px">Frame rate:</div>
<div class="a lbl" style="left:150px;top:532px;line-height:14px;font-size:11px">Width:</div>
<div class="a lbl" style="left:150px;top:558px;line-height:14px;font-size:11px">Height:</div>
<div class="a" style="left:250px;top:472px;width:22px;height:22px;border-radius:3px;border:1px solid #D0CDBE;background:linear-gradient(#FFFFFF,#F0EFE8 60%,#E0DDD0)"></div>
<div class="a" style="left:253px;top:475px;width:16px;height:16px;background:#fff;border:1px solid #888;border-right-color:#ddd;border-bottom-color:#ddd"></div>
<div class="a" style="left:265px;top:487px;border-left:4px solid transparent;border-bottom:4px solid #000"></div>
<div class="a inp" style="left:250px;top:503px;width:57px;height:20px"></div>
<div class="a lbl" style="left:253px;top:506px;line-height:14px;font-size:11px">15</div>
<div class="a ddb" style="left:308px;top:503px;width:12px;height:20px"></div>
<div class="a inp" style="left:250px;top:529px;width:57px;height:20px"></div>
<div class="a lbl" style="left:253px;top:532px;line-height:14px;font-size:11px">400</div>
<div class="a ddb" style="left:308px;top:529px;width:12px;height:20px"></div>
<div class="a inp" style="left:250px;top:555px;width:57px;height:20px"></div>
<div class="a lbl" style="left:253px;top:558px;line-height:14px;font-size:11px">275</div>
<div class="a ddb" style="left:308px;top:555px;width:12px;height:20px"></div>
<div class="a" style="left:473px;top:475px;width:1px;height:108px;background:#ACA899"></div>
<div class="a lbl" style="left:485px;top:477px;line-height:14px;font-size:10px;color:#0000E0;text-decoration:underline">P</div>
<div class="a lbl" style="left:485px;top:498px;line-height:14px;font-size:10px;color:#0000E0;text-decoration:underline">E</div>
<div class="a lbl" style="left:485px;top:519px;line-height:14px;font-size:10px;color:#0000E0;text-decoration:underline">P</div>

<!--CENTER-->

<!-- right column: shape panel -->
<div class="a" style="left:495px;top:87px;width:1px;height:508px;background:#ACA899"></div>
<div class="a tb" style="left:496px;top:87px;width:210px;height:18px"></div>
<div class="a" style="left:496px;top:105px;width:210px;height:1px;background:#F8F5E6"></div>
<div class="a tab" style="left:499px;top:90px;width:46px;height:16px;background:linear-gradient(#FFFFFF,#F4F2E8 60%,#ECE9D8)"></div>
<div class="a" style="left:503px;top:96px;width:1px;height:1px;background:#A8A698"></div>
<div class="a" style="left:503px;top:99px;width:1px;height:1px;background:#A8A698"></div>
<div class="a" style="left:503px;top:102px;width:1px;height:1px;background:#A8A698"></div>
<div class="a lbl" style="left:507px;top:91px;line-height:14px;font-size:11px">Shape</div>
<div class="a lbl" style="left:553px;top:91px;line-height:14px;font-size:11px;color:#F4F2EA">Scene</div>
<div class="a" style="left:590px;top:93px;width:1px;height:10px;background:#F4F2EA"></div>
<div class="a" style="left:692px;top:90px;width:14px;height:14px;border-radius:7px;background:radial-gradient(circle at 40% 35%,#E8EEFC,#B8C8EE 70%,#98ACDA)"></div>
<div class="a" style="left:695px;top:95px;border-left:4px solid transparent;border-right:4px solid transparent;border-top:5px solid #2A44B8"></div>
<div class="a" style="left:501px;top:111px;width:116px;height:31px;border:1px solid;border-color:#ACA899 #FFFFFF #FFFFFF #ACA899;background:repeating-conic-gradient(#F6F5EE 0 25%,#E8E5D6 0 50%) 0 0/2px 2px"></div>
<svg class="a" style="left:510px;top:119px" width="14" height="14"><path d="M2.5 9L9.5 2L12 4.5L5 11.5Z" fill="#F49A30" stroke="#B85A10" stroke-width=".8"/><path d="M9.5 2L10.8 .8L13.2 3.2L12 4.5Z" fill="#9AC0F0" stroke="#3060C0" stroke-width=".6"/><path d="M2.5 9L.5 13.5L5 11.5Z" fill="#F0D8A8"/><path d="M.5 13.5L1.3 11.5L2.5 12.7Z" fill="#303030"/></svg>
<div class="a" style="left:528px;top:117px;width:20px;height:20px;border-radius:3px;border:1px solid #D0CDBE;background:linear-gradient(#FFFFFF,#F0EFE8 60%,#E0DDD0)"></div>
<svg class="a" style="left:531px;top:120px" width="14" height="14"><rect width="13" height="13" fill="#fff"/><path d="M0 0H13V6L6 13H0Z" fill="#006600"/><path d="M13 9V13H9Z" fill="#000"/></svg>
<div class="a inp" style="left:553px;top:117px;width:41px;height:20px"></div>
<div class="a lbl" style="left:556px;top:120px;line-height:14px;font-size:11px">4.75</div>
<div class="a ddb" style="left:595px;top:117px;width:11px;height:20px"></div>
<svg class="a" style="left:509px;top:148px" width="16" height="16"><g transform="translate(16 0) scale(-1 1)"><path d="M4.5 5.5Q3.5 1 7 1Q9.5 1 9.5 4.5" fill="none" stroke="#303030" stroke-width="1"/><path d="M1.5 8.5L6 4L12 9.5L7.5 14Q6.5 15 5 14L2 11Q1 9.5 1.5 8.5Z" fill="#D4D4F8" stroke="#303030" stroke-width="1"/><circle cx="7" cy="7" r="1" fill="#fff" stroke="#303030" stroke-width=".7"/><path d="M11 4.5Q15 6.5 15 11L14.5 15.5L13 15L12.5 9.5Z" fill="#202020"/></g></svg>
<div class="a" style="left:528px;top:147px;width:20px;height:20px;border-radius:3px;border:1px solid #D0CDBE;background:linear-gradient(#FFFFFF,#F0EFE8 60%,#E0DDD0)"></div>
<svg class="a" style="left:531px;top:150px" width="14" height="14"><rect width="13" height="13" fill="#fff"/><path d="M0 0H13V6L6 13H0Z" fill="#3300CC"/><path d="M13 9V13H9Z" fill="#000"/></svg>
<div class="a inp" style="left:553px;top:147px;width:57px;height:21px"></div>
<div class="a lbl" style="left:557px;top:150px;line-height:14px;font-size:11px">Solid</div>
<div class="a" style="left:593px;top:149px;width:15px;height:17px;border-radius:2px;background:linear-gradient(135deg,#D6E0FA,#B2C6F6)"></div>
<svg class="a" style="left:596px;top:154px" width="9" height="7"><path d="M1 1.5L4.5 5L8 1.5" fill="none" stroke="#4D6185" stroke-width="2"/></svg>
<div class="a lbl" style="left:624px;top:119px;line-height:14px;font-size:11px">R:</div>
<div class="a lbl" style="left:624px;top:140px;line-height:14px;font-size:11px">G:</div>
<div class="a lbl" style="left:624px;top:161px;line-height:14px;font-size:11px">B:</div>
<div class="a lbl" style="left:624px;top:182px;line-height:14px;font-size:11px">A:</div>
<div class="a inp" style="left:642px;top:116px;width:30px;height:20px"></div>
<div class="a lbl" style="left:645px;top:119px;line-height:14px;font-size:11px">0</div>
<div class="a ddb" style="left:674px;top:116px;width:10px;height:20px"></div>
<div class="a inp" style="left:642px;top:137px;width:30px;height:20px"></div>
<div class="a lbl" style="left:645px;top:140px;line-height:14px;font-size:11px">102</div>
<div class="a ddb" style="left:674px;top:137px;width:10px;height:20px"></div>
<div class="a inp" style="left:642px;top:158px;width:30px;height:20px"></div>
<div class="a lbl" style="left:645px;top:161px;line-height:14px;font-size:11px">0</div>
<div class="a ddb" style="left:674px;top:158px;width:10px;height:20px"></div>
<div class="a inp" style="left:642px;top:179px;width:30px;height:20px"></div>
<div class="a lbl" style="left:645px;top:182px;line-height:14px;font-size:11px">100</div>
<div class="a ddb" style="left:674px;top:179px;width:10px;height:20px"></div>
<div class="a lbl" style="left:687px;top:182px;line-height:14px;font-size:11px">%</div>
<!-- color picker -->
<div class="a" style="left:501px;top:204px;width:89px;height:88px;border:1px solid #C0BEB0;background:linear-gradient(to bottom,rgba(0,0,0,0),#000),linear-gradient(to right,#00FF00,#FFFFFF)"></div>
<div class="a" style="left:501px;top:250px;width:2px;height:4px;border:1px solid #fff;background:#000;border-left:none"></div>
<div class="a" style="left:501px;top:259px;width:2px;height:4px;border:1px solid #fff;background:#000;border-left:none"></div>
<div class="a" style="left:505px;top:255px;width:5px;height:3px;border:1px solid #fff;background:#000"></div>
<div class="a" style="left:594px;top:204px;width:20px;height:88px;border:1px solid #C0BEB0;background:linear-gradient(#FF0000,#FFFF00 17%,#00FF00 33%,#00FFFF 50%,#0000FF 67%,#FF00FF 83%,#FF0000)"></div>
<div class="a" style="left:603px;top:225px;width:3px;height:5px;border:1px solid #fff;background:#000"></div>
<div class="a" style="left:603px;top:237px;width:3px;height:5px;border:1px solid #fff;background:#000"></div>
<div class="a" style="left:596px;top:231px;width:5px;height:3px;border:1px solid #fff;background:#000"></div>
<div class="a" style="left:608px;top:231px;width:5px;height:3px;border:1px solid #fff;background:#000"></div>
<div class="a inp" style="left:625px;top:204px;width:60px;height:20px"></div>
<div class="a lbl" style="left:628px;top:207px;line-height:14px;font-size:11px">#006600</div>
<div class="a" style="left:625px;top:228px;width:60px;height:47px;background:#006600;border:1px solid #F4F2EA"></div>
<div class="a" style="left:496px;top:295px;width:211px;height:1px;background:#ACA899"></div>
<div class="a" style="left:496px;top:296px;width:211px;height:1px;background:#FFFFFF"></div>

<!-- transform panel -->
<div class="a tb" style="left:496px;top:299px;width:210px;height:18px"></div>
<div class="a" style="left:496px;top:317px;width:210px;height:1px;background:#F8F5E6"></div>
<div class="a tab" style="left:499px;top:301px;width:64px;height:17px;background:linear-gradient(#FFFFFF,#F4F2E8 60%,#ECE9D8)"></div>
<div class="a" style="left:503px;top:307px;width:1px;height:1px;background:#A8A698"></div>
<div class="a" style="left:503px;top:310px;width:1px;height:1px;background:#A8A698"></div>
<div class="a" style="left:503px;top:313px;width:1px;height:1px;background:#A8A698"></div>
<div class="a lbl" style="left:507px;top:303px;line-height:14px;font-size:11px">Transform</div>
<div class="a lbl" style="left:572px;top:303px;line-height:14px;font-size:11px;color:#F4F2EA">Layout</div>
<div class="a" style="left:613px;top:305px;width:1px;height:10px;background:#F4F2EA"></div>
<div class="a" style="left:692px;top:302px;width:14px;height:14px;border-radius:7px;background:radial-gradient(circle at 40% 35%,#E8EEFC,#B8C8EE 70%,#98ACDA)"></div>
<div class="a" style="left:695px;top:307px;border-left:4px solid transparent;border-right:4px solid transparent;border-top:5px solid #2A44B8"></div>
<div class="a lbl" style="left:504px;top:325px;line-height:14px;font-size:11px">X:</div>
<div class="a lbl" style="left:504px;top:348px;line-height:14px;font-size:11px">Y:</div>
<svg class="a" style="left:502px;top:375px" width="14" height="11"><path d="M.5 3H13.5M3 .5L.5 3L3 5.5M11 .5L13.5 3L11 5.5" fill="none" stroke="#000" stroke-width="1"/><rect x="1.5" y="5.5" width="11" height="4" fill="#fff" stroke="#000" stroke-width="1.2"/></svg>
<svg class="a" style="left:503px;top:395px" width="11" height="15"><rect x="1" y="1" width="4" height="13" fill="#fff" stroke="#000" stroke-width="1.3"/><path d="M8.5 .5V14.5M6.5 2.5L8.5 .5L10.5 2.5M6.5 12.5L8.5 14.5L10.5 12.5" fill="none" stroke="#000" stroke-width="1"/></svg>
<div class="a dinp" style="left:525px;top:322px;width:51px;height:20px"></div>
<div class="a lbl" style="left:528px;top:325px;line-height:14px;font-size:11px;color:#ACA899">193.2</div>
<div class="a dinp" style="left:525px;top:345px;width:51px;height:20px"></div>
<div class="a lbl" style="left:528px;top:348px;line-height:14px;font-size:11px;color:#ACA899">167.5</div>
<div class="a dinp" style="left:525px;top:369px;width:51px;height:20px"></div>
<div class="a lbl" style="left:528px;top:372px;line-height:14px;font-size:11px;color:#ACA899">190.5</div>
<div class="a dinp" style="left:525px;top:392px;width:51px;height:20px"></div>
<div class="a lbl" style="left:528px;top:395px;line-height:14px;font-size:11px;color:#ACA899">224.5</div>
<svg class="a" style="left:589px;top:327px" width="17" height="10"><path d="M1.5 1.5H8M1.5 1.5V8" stroke="#000" stroke-width="1" stroke-dasharray="1 1"/><path d="M1 8.3H9M8 1.2H16.5" stroke="#000" stroke-width="1.6"/><path d="M16 1.5L9 8.5M8.5 1.5L1.5 8.5" stroke="#000" stroke-width="1" stroke-dasharray="1.4 .8"/></svg>
<svg class="a" style="left:591px;top:346px" width="11" height="17"><path d="M2 1.5H9.5M9.5 1.5V8" stroke="#000" stroke-width="1" stroke-dasharray="1 1"/><path d="M1.7 1V9M9.3 8V16.5" stroke="#000" stroke-width="1.6"/><path d="M1.5 1.5L9.5 9.5M1.5 8.5L9.5 16" stroke="#000" stroke-width="1" stroke-dasharray="1.4 .8"/></svg>
<svg class="a" style="left:589px;top:372px" width="16" height="16"><rect x="1.5" y="9.5" width="13" height="4.5" fill="#fff" stroke="#000" stroke-width="1.2"/><path d="M2 2.5L3.5 4L2 5.5L.5 4Z M13 2.5L14.5 4L13 5.5L11.5 4Z" fill="#000"/><circle cx="6" cy="2.2" r="1.1" fill="none" stroke="#000" stroke-width=".8"/><circle cx="9.5" cy="6" r="1.1" fill="none" stroke="#000" stroke-width=".8"/><path d="M5.5 6.5L10 1.5" stroke="#000" stroke-width="1"/></svg>
<svg class="a" style="left:590px;top:395px" width="16" height="16"><rect x="2.5" y="1.5" width="5" height="12.5" fill="#fff" stroke="#000" stroke-width="1.2"/><path d="M11 1L12.5 2.5L11 4L9.5 2.5Z M11 11L12.5 12.5L11 14L9.5 12.5Z" fill="#000"/><circle cx="9.5" cy="5.5" r="1.1" fill="none" stroke="#000" stroke-width=".8"/><circle cx="12.5" cy="9" r="1.1" fill="none" stroke="#000" stroke-width=".8"/><path d="M9 9.5L13 5" stroke="#000" stroke-width="1"/></svg>
<div class="a dinp" style="left:612px;top:322px;width:44px;height:20px"></div>
<div class="a lbl" style="left:612px;top:325px;width:40px;text-align:right;line-height:14px;font-size:11px;color:#ACA899">0</div>
<div class="a dinp" style="left:612px;top:345px;width:44px;height:20px"></div>
<div class="a lbl" style="left:612px;top:348px;width:40px;text-align:right;line-height:14px;font-size:11px;color:#ACA899">0</div>
<div class="a dinp" style="left:612px;top:369px;width:44px;height:20px"></div>
<div class="a lbl" style="left:612px;top:372px;width:40px;text-align:right;line-height:14px;font-size:11px;color:#ACA899">187.6</div>
<div class="a dinp" style="left:612px;top:392px;width:44px;height:20px"></div>
<div class="a lbl" style="left:612px;top:395px;width:40px;text-align:right;line-height:14px;font-size:11px;color:#ACA899">187.6</div>
<div class="a" style="left:657px;top:325px;width:4px;height:4px;border:1px solid #000;border-radius:2px"></div>
<div class="a" style="left:657px;top:349px;width:4px;height:4px;border:1px solid #000;border-radius:2px"></div>
<div class="a lbl" style="left:656px;top:371px;line-height:14px;font-size:11px">%</div>
<div class="a lbl" style="left:656px;top:394px;line-height:14px;font-size:11px">%</div>
<div class="a" style="left:669px;top:332px;width:8px;height:24px;border:3px solid #000;border-left:none"></div>
<div class="a" style="left:669px;top:379px;width:8px;height:23px;border:3px solid #000;border-left:none"></div>
<div class="a" style="left:681px;top:335px;width:17px;height:16px;border:1px solid #98B0D8;border-radius:3px;background:linear-gradient(#FFFFFF,#F2F1EA)"></div>
<svg class="a" style="left:684px;top:338px" width="11" height="10"><path d="M3 5V3.5Q3 1 5.5 1Q8 1 8 3.5V5" fill="none" stroke="#A8A698" stroke-width="1.3"/><rect x="1.5" y="5" width="8" height="4.5" fill="#A8A698"/></svg>
<div class="a" style="left:681px;top:382px;width:17px;height:16px;border:1px solid #98B0D8;border-radius:3px;background:linear-gradient(#FFFFFF,#F2F1EA)"></div>
<svg class="a" style="left:684px;top:385px" width="11" height="10"><path d="M3 5V3.5Q3 1 5.5 1Q8 1 8 3.5V5" fill="none" stroke="#A8A698" stroke-width="1.3"/><rect x="1.5" y="5" width="8" height="4.5" fill="#A8A698"/></svg>
<div class="a lbl" style="left:500px;top:423px;line-height:14px;font-size:11px">Color transform:</div>
<div class="a" style="left:613px;top:420px;width:83px;height:19px;border:1px solid #C8C5B6;background:#ECE9D8"></div>
<div class="a lbl" style="left:617px;top:423px;line-height:14px;font-size:11px;color:#ACA899">None</div>
<div class="a" style="left:679px;top:422px;width:15px;height:15px;border-radius:2px;background:linear-gradient(#F0EFE8,#E2DFD2);border:1px solid #D8D5C8"></div>
<svg class="a" style="left:682px;top:426px" width="9" height="7"><path d="M1 1.5L4.5 5L8 1.5" fill="none" stroke="#C0BDB0" stroke-width="2"/></svg>
<div class="a" style="left:496px;top:469px;width:211px;height:1px;background:#ACA899"></div>
<div class="a" style="left:496px;top:470px;width:211px;height:1px;background:#FFFFFF"></div>
<!-- library panel -->
<div class="a tb" style="left:496px;top:474px;width:210px;height:18px"></div>
<div class="a" style="left:496px;top:492px;width:210px;height:1px;background:#F8F5E6"></div>
<div class="a lbl" style="left:507px;top:477px;line-height:14px;font-size:11px;color:#F4F2EA">Library</div>
<div class="a tab" style="left:548px;top:476px;width:87px;height:17px;background:linear-gradient(#FFFFFF,#F4F2E8 60%,#ECE9D8)"></div>
<div class="a" style="left:552px;top:482px;width:1px;height:1px;background:#A8A698"></div>
<div class="a" style="left:552px;top:485px;width:1px;height:1px;background:#A8A698"></div>
<div class="a" style="left:552px;top:488px;width:1px;height:1px;background:#A8A698"></div>
<div class="a lbl" style="left:556px;top:477px;line-height:14px;font-size:11px">Movie Explorer</div>
<div class="a lbl" style="left:643px;top:477px;line-height:14px;font-size:11px;color:#F4F2EA">Gallery</div>
<div class="a" style="left:684px;top:479px;width:1px;height:10px;background:#F4F2EA"></div>
<div class="a" style="left:692px;top:476px;width:14px;height:14px;border-radius:7px;background:radial-gradient(circle at 40% 35%,#E8EEFC,#B8C8EE 70%,#98ACDA)"></div>
<div class="a" style="left:695px;top:481px;border-left:4px solid transparent;border-right:4px solid transparent;border-top:5px solid #2A44B8"></div>
<svg class="a" style="left:509px;top:499px" width="26" height="17"><defs><linearGradient id="fun" x1="0" y1="0" x2="1" y2="0"><stop offset="0" stop-color="#F8D060"/><stop offset="1" stop-color="#C88818"/></linearGradient></defs><path d="M.5 1.5H14L9.5 6V11H6.5V6Z" fill="url(#fun)"/><rect x="7.5" y="4.5" width="10" height="8" fill="#F0F4FC" stroke="#2A4870" stroke-width="1"/><path d="M9.5 6.5H15.5M9.5 8.5H15.5M9.5 10.5H15.5" stroke="#30A860" stroke-width="1"/><path d="M24.5 12V15.5H21Z" fill="#000"/></svg>
<div class="a inp" style="left:540px;top:497px;width:136px;height:20px"></div>
<svg class="a" style="left:682px;top:499px" width="17" height="17"><rect x=".5" y=".5" width="13" height="11" fill="#F0F2FC" stroke="#8CA0C8" stroke-width="1"/><rect x="5" y="1" width="8" height="3" fill="#A8B4C8"/><path d="M13.5 3V11" stroke="#203050" stroke-width="1.2"/><circle cx="8" cy="7.5" r="3.8" fill="#B8D4FA" stroke="#4A5870" stroke-width="1"/><circle cx="7" cy="6.5" r="1.5" fill="#E8F4FF"/><path d="M10.8 10.3L14.8 14.3" stroke="#202020" stroke-width="2.8"/><path d="M11 10.5L14.5 14" stroke="#E8B020" stroke-width="1.4"/></svg>
<div class="a" style="left:501px;top:523px;width:202px;height:67px;border:1px solid #7F9DB9;background:#fff"></div>
<div class="a" style="left:503px;top:541px;width:180px;height:16px;background:#ECE9D8"></div>
<div class="a" style="left:510px;top:529px;width:9px;height:9px;border:1px solid #888;background:linear-gradient(135deg,#fff,#D8D4C4)"></div>
<div class="a" style="left:512px;top:533px;width:5px;height:1px;background:#000"></div><div class="a" style="left:514px;top:531px;width:1px;height:5px;background:#000"></div>
<div class="a" style="left:510px;top:545px;width:9px;height:9px;border:1px solid #888;background:linear-gradient(135deg,#fff,#D8D4C4)"></div>
<div class="a" style="left:512px;top:549px;width:5px;height:1px;background:#000"></div><div class="a" style="left:514px;top:547px;width:1px;height:5px;background:#000"></div>
<div class="a" style="left:510px;top:561px;width:9px;height:9px;border:1px solid #888;background:linear-gradient(135deg,#fff,#D8D4C4)"></div>
<div class="a" style="left:512px;top:565px;width:5px;height:1px;background:#000"></div><div class="a" style="left:514px;top:563px;width:1px;height:5px;background:#000"></div>
<div class="a" style="left:510px;top:577px;width:9px;height:9px;border:1px solid #888;background:linear-gradient(135deg,#fff,#D8D4C4)"></div>
<div class="a" style="left:512px;top:581px;width:5px;height:1px;background:#000"></div><div class="a" style="left:514px;top:579px;width:1px;height:5px;background:#000"></div>
<svg class="a" style="left:525px;top:525px" width="15" height="16"><defs><linearGradient id="sc3" x1="0" y1="0" x2="1" y2="1"><stop offset="0" stop-color="#E8F0FF"/><stop offset="1" stop-color="#A8C0F0"/></linearGradient></defs><path d="M1.5 1.5H9L13.5 6V14.5H1.5Z" fill="url(#sc3)" stroke="#2A3890"/><path d="M3.5 8.5Q3.5 6 6 6Q8.5 5 10.5 7Q11.5 9 10.5 11Q8.5 13 5.5 12Q3 11.5 3.5 8.5Z" fill="#3C8CF0"/></svg>
<svg class="a" style="left:525px;top:541px" width="15" height="15"><path d="M7 1.5L14 9.5H7Z" fill="#10A050"/><rect x="2" y="7" width="6" height="6" fill="#D81878"/></svg>
<svg class="a" style="left:525px;top:557px" width="15" height="15"><path d="M7 1.5L14 9.5H7Z" fill="#10A050"/><rect x="2" y="7" width="6" height="6" fill="#D81878"/></svg>
<svg class="a" style="left:525px;top:573px" width="15" height="15"><path d="M7 1.5L14 9.5H7Z" fill="#10A050"/><rect x="2" y="7" width="6" height="6" fill="#D81878"/></svg>
<div class="a lbl" style="left:545px;top:526px;line-height:14px;font-size:10.5px">Scene 1</div>
<div class="a lbl" style="left:545px;top:542px;line-height:14px;font-size:10.5px">Symbol 1</div>
<div class="a lbl" style="left:545px;top:558px;line-height:14px;font-size:10.5px">Symbol 2</div>
<div class="a lbl" style="left:545px;top:574px;line-height:14px;font-size:10.5px">Symbol 3</div>
<div class="a" style="left:683px;top:524px;width:19px;height:65px;background:linear-gradient(90deg,#F3F1EA,#FEFEFB 60%,#F6F5F0)"></div>
<div class="a" style="left:684px;top:526px;width:16px;height:15px;border-radius:2px;background:linear-gradient(135deg,#D6E0FA,#B4C8F6);border:1px solid #fff;box-shadow:0 1px 0 #9AB0E0"></div>
<svg class="a" style="left:688px;top:530px" width="9" height="7"><path d="M1 5.5L4.5 2L8 5.5" fill="none" stroke="#4D6185" stroke-width="2"/></svg>
<div class="a" style="left:684px;top:543px;width:16px;height:7px;border-radius:2px;background:linear-gradient(135deg,#D6E0FA,#B4C8F6);border:1px solid #fff;box-shadow:0 1px 0 #9AB0E0"></div>
<div class="a" style="left:684px;top:572px;width:16px;height:15px;border-radius:2px;background:linear-gradient(135deg,#D6E0FA,#B4C8F6);border:1px solid #fff;box-shadow:0 1px 0 #9AB0E0"></div>
<svg class="a" style="left:688px;top:576px" width="9" height="7"><path d="M1 1.5L4.5 5L8 1.5" fill="none" stroke="#4D6185" stroke-width="2"/></svg>
<div class="a" style="left:496px;top:594px;width:211px;height:1px;background:#ACA899"></div>

<!--RIGHT-->

<!-- status bar -->
<div class="a" style="left:3px;top:594px;width:704px;height:1px;background:#ACA899"></div>
<div class="a" style="left:3px;top:595px;width:704px;height:1px;background:#F4F2E6"></div>
<div class="a mono" style="left:4px;top:600px;font-size:12px;letter-spacing:-1.2px;line-height:14px;white-space:pre">For Help, press F1</div>
<div class="a" style="left:602px;top:599px;width:1px;height:13px;background:#C8C5B6"></div><div class="a" style="left:603px;top:599px;width:1px;height:13px;background:#fff"></div>
<div class="a" style="left:628px;top:599px;width:1px;height:13px;background:#C8C5B6"></div><div class="a" style="left:629px;top:599px;width:1px;height:13px;background:#fff"></div>
<div class="a" style="left:654px;top:599px;width:1px;height:13px;background:#C8C5B6"></div><div class="a" style="left:655px;top:599px;width:1px;height:13px;background:#fff"></div>
<div class="a" style="left:686px;top:599px;width:1px;height:13px;background:#C8C5B6"></div><div class="a" style="left:687px;top:599px;width:1px;height:13px;background:#fff"></div>
<div class="a mono" style="left:634px;top:599px;font-size:12px;letter-spacing:-1.2px;line-height:14px">NUM</div>
<svg class="a" style="left:694px;top:601px" width="12" height="12"><g fill="#B8B5A6"><rect x="8" y="1" width="2" height="2"/><rect x="4" y="5" width="2" height="2"/><rect x="8" y="5" width="2" height="2"/><rect x="0" y="9" width="2" height="2"/><rect x="4" y="9" width="2" height="2"/><rect x="8" y="9" width="2" height="2"/></g><g fill="#fff"><rect x="9" y="2" width="1" height="1"/><rect x="5" y="6" width="1" height="1"/><rect x="9" y="6" width="1" height="1"/><rect x="1" y="10" width="1" height="1"/><rect x="5" y="10" width="1" height="1"/><rect x="9" y="10" width="1" height="1"/></g></svg>

<!--STATUS-->

</body></html>
